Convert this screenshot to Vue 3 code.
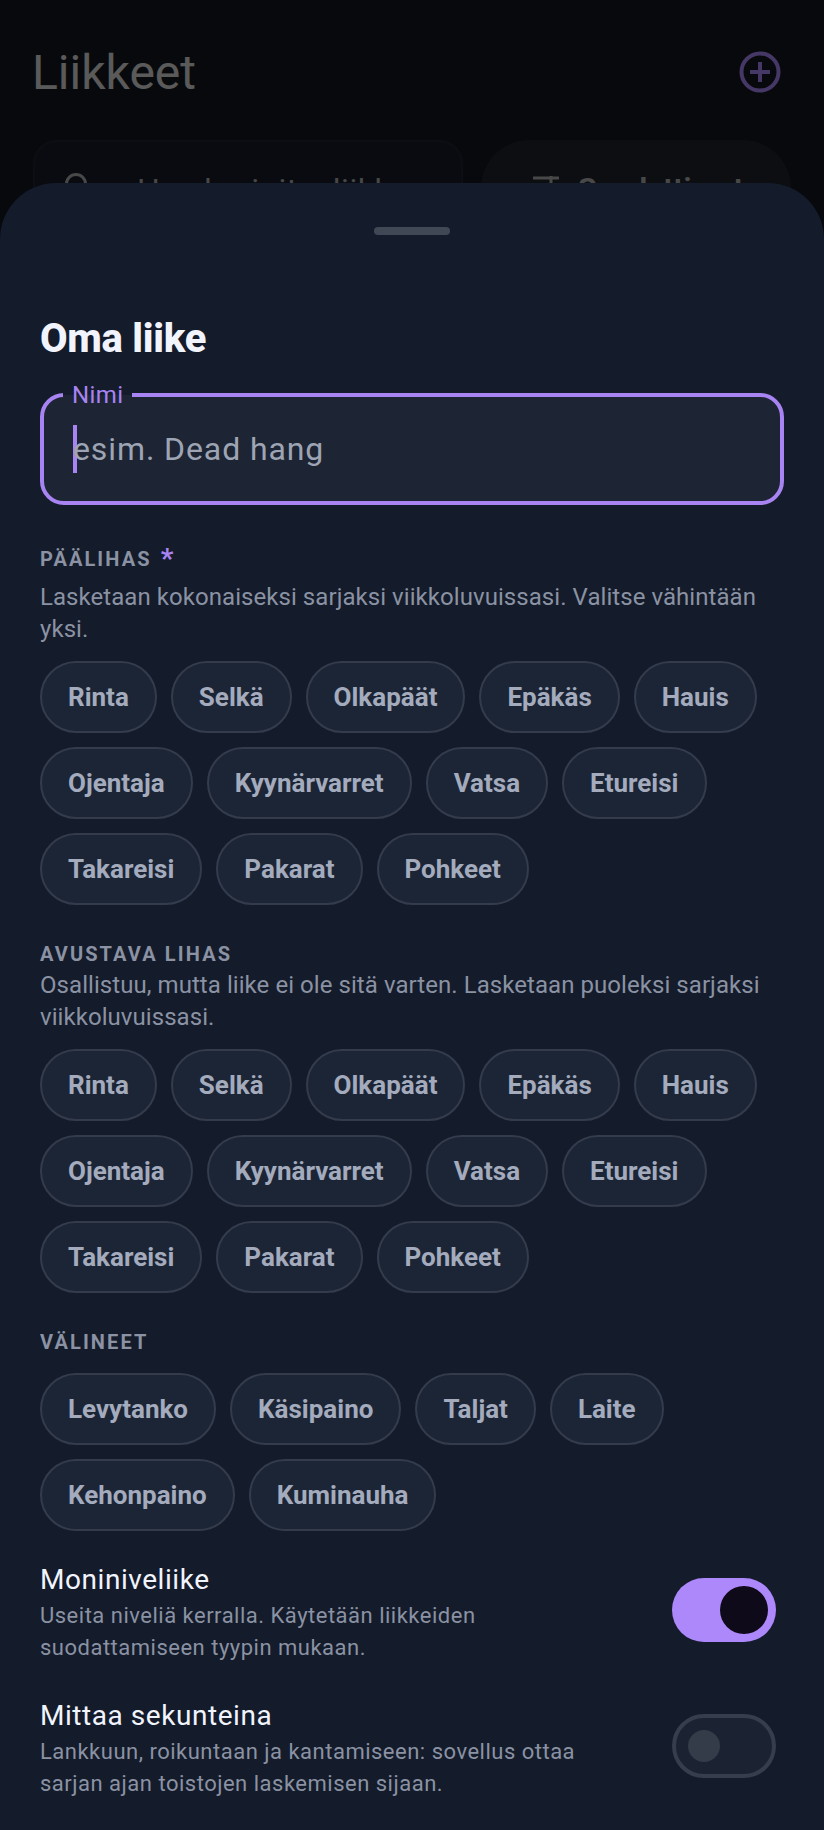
<template>
  <div class="screen">
    <div class="page">
      <header class="page-head">
        <h1>Liikkeet</h1>
        <svg class="add-icon" width="44" height="44" viewBox="0 0 44 44" fill="none">
          <circle cx="22" cy="22" r="18.5" stroke="#b08cff" stroke-width="4" />
          <path d="M22 12v20M12 22h20" stroke="#b08cff" stroke-width="4" />
        </svg>
      </header>
      <div class="page-tools">
        <div class="search">
          <svg width="32" height="40" viewBox="0 0 32 40" fill="none">
            <circle cx="11" cy="14" r="9.5" stroke="#b5b5b5" stroke-width="3" />
          </svg>
          <span>Hae harjoitusliikkeen</span>
        </div>
        <div class="filter">
          <svg width="32" height="40" viewBox="0 0 32 40" fill="none">
            <path d="M2 9h26M20 7v8" stroke="#b5b5b5" stroke-width="3" />
          </svg>
          <span>Suodattimet</span>
        </div>
      </div>
      <div class="scrim"></div>
    </div>

    <section class="sheet">
      <div class="handle"></div>
      <h2>Oma liike</h2>

      <div class="field">
        <span class="field-label">Nimi</span>
        <span class="caret"></span>
        <span class="placeholder">esim. Dead hang</span>
      </div>

      <div v-for="group in groups" :key="group.title" class="group">
        <div class="group-title" :class="{ required: group.required }">
          {{ group.title }}<span v-if="group.required" class="star"> *</span>
        </div>
        <p v-if="group.hint" class="hint">{{ group.hint }}</p>
        <div class="chips">
          <span v-for="chip in group.chips" :key="chip" class="chip">{{ chip }}</span>
        </div>
      </div>

      <div v-for="opt in options" :key="opt.title" class="option">
        <div class="option-text">
          <div class="option-title">{{ opt.title }}</div>
          <p class="option-hint">{{ opt.hint }}</p>
        </div>
        <div class="toggle" :class="{ on: opt.on }"><span class="thumb"></span></div>
      </div>
    </section>
  </div>
</template>

<script setup>
const muscles = [
  'Rinta', 'Selkä', 'Olkapäät', 'Epäkäs', 'Hauis', 'Ojentaja',
  'Kyynärvarret', 'Vatsa', 'Etureisi', 'Takareisi', 'Pakarat', 'Pohkeet',
]

const groups = [
  {
    title: 'PÄÄLIHAS',
    required: true,
    hint: 'Lasketaan kokonaiseksi sarjaksi viikkoluvuissasi. Valitse vähintään yksi.',
    chips: muscles,
  },
  {
    title: 'AVUSTAVA LIHAS',
    hint: 'Osallistuu, mutta liike ei ole sitä varten. Lasketaan puoleksi sarjaksi viikkoluvuissasi.',
    chips: muscles,
  },
  {
    title: 'VÄLINEET',
    chips: ['Levytanko', 'Käsipaino', 'Taljat', 'Laite', 'Kehonpaino', 'Kuminauha'],
  },
]

const options = [
  {
    title: 'Moniniveliike',
    hint: 'Useita niveliä kerralla. Käytetään liikkeiden suodattamiseen tyypin mukaan.',
    on: true,
  },
  {
    title: 'Mittaa sekunteina',
    hint: 'Lankkuun, roikuntaan ja kantamiseen: sovellus ottaa sarjan ajan toistojen laskemisen sijaan.',
    on: false,
  },
]
</script>

<style>
html, body {
  background: #07090d;
}
</style>

<style scoped>
.screen {
  position: relative;
  width: 824px;
  height: 1830px;
  overflow: hidden;
  background: #121720;
  font-family: Roboto, "Noto Sans", sans-serif;
}

/* page under the sheet */
.page {
  position: relative;
  height: 100%;
  padding: 40px 33px 0 32px;
  box-sizing: border-box;
}
.page-head {
  display: flex;
  align-items: center;
  justify-content: space-between;
  height: 64px;
}
.page-head h1 {
  margin: 0;
  font-size: 48px;
  font-weight: 400;
  color: #e0e0e0;
}
.add-icon {
  margin-right: 9px;
}
.page-tools {
  display: flex;
  gap: 18px;
  margin-top: 36px;
}
.search {
  display: flex;
  align-items: center;
  gap: 40px;
  width: 430px;
  height: 100px;
  margin-left: 1px;
  padding-left: 30px;
  box-sizing: border-box;
  border: 2px solid #1f2430;
  border-radius: 24px;
  background: #171d2b;
  color: #b5b5b5;
  font-size: 32px;
  letter-spacing: 0.5px;
}
.filter {
  display: flex;
  align-items: center;
  gap: 15px;
  width: 310px;
  height: 100px;
  padding: 0 0 3px 50px;
  box-sizing: border-box;
  border-radius: 48px;
  background: #1e242c;
  color: #b5b5b5;
  font-size: 30px;
  font-weight: 700;
}
.scrim {
  position: absolute;
  inset: 0;
  background: rgba(0, 0, 0, 0.6);
}

/* bottom sheet */
.sheet {
  position: absolute;
  left: 0;
  right: 0;
  top: 183px;
  bottom: 0;
  padding: 44px 40px 0;
  border-radius: 56px 56px 0 0;
  background: #141b2a;
}
.handle {
  width: 76px;
  height: 8px;
  margin: 0 auto;
  border-radius: 4px;
  background: #404856;
}
h2 {
  margin: 82px 0 0;
  font-size: 40px;
  line-height: 44px;
  font-weight: 800;
  letter-spacing: -0.3px;
  color: #f1f4fd;
}
.field {
  position: relative;
  display: flex;
  align-items: center;
  height: 112px;
  margin: 32px 0 42px;
  padding-left: 29px;
  box-sizing: border-box;
  border: 4px solid #a884f3;
  border-radius: 24px;
  background: #1d2433;
}
.field-label {
  position: absolute;
  left: 19px;
  top: -14px;
  padding: 0 9px;
  background: linear-gradient(#141b2a 12px, #1d2433 12px);
  font-size: 24px;
  line-height: 24px;
  letter-spacing: 0.4px;
  color: #a884f3;
}
.caret {
  width: 4px;
  height: 48px;
  margin-right: -4px;
  background: #a884f3;
}
.placeholder {
  font-size: 32px;
  letter-spacing: 0.9px;
  color: #9da5b4;
}
.group {
  margin-top: 37px;
}
.group-title {
  font-size: 20px;
  line-height: 24px;
  font-weight: 700;
  letter-spacing: 2.1px;
  color: #8a92a3;
}
.group-title.required {
  margin-bottom: 10px;
}
.star {
  font-size: 28px;
  vertical-align: -2px;
  color: #a884f3;
}
.hint {
  margin: 3px 0 0;
  font-size: 24px;
  line-height: 32px;
  letter-spacing: 0.06px;
  color: #8a92a3;
}
.chips {
  display: flex;
  flex-wrap: wrap;
  gap: 14px;
  margin-top: 16px;
}
.group-title + .chips {
  margin-top: 19px;
}
.chip {
  display: flex;
  align-items: center;
  height: 72px;
  padding: 0 26px;
  box-sizing: border-box;
  border: 2px solid #343c4c;
  border-radius: 36px;
  background: #1c2536;
  font-size: 26px;
  font-weight: 700;
  color: #a3abbd;
}
.option {
  display: flex;
  align-items: flex-start;
  justify-content: space-between;
  margin-top: 31px;
  padding-right: 8px;
}
.option + .option {
  margin-top: 34px;
}
.option-text {
  width: 560px;
}
.option-title {
  font-size: 28px;
  line-height: 36px;
  letter-spacing: 0.55px;
  color: #f1f4fd;
}
.option-hint {
  margin: 2px 0 0;
  font-size: 22px;
  line-height: 32px;
  letter-spacing: 0.5px;
  color: #8a92a3;
}
.toggle {
  position: relative;
  display: flex;
  align-items: center;
  width: 104px;
  height: 64px;
  margin-top: 16px;
  padding: 0 12px;
  box-sizing: border-box;
  border: 4px solid #363d4c;
  border-radius: 32px;
  background: #1b2333;
}
.thumb {
  width: 32px;
  height: 32px;
  border-radius: 50%;
  background: #343b49;
}
.toggle.on {
  justify-content: flex-end;
  padding: 0 8px;
  border: none;
  background: #ad88fb;
}
.toggle.on .thumb {
  width: 48px;
  height: 48px;
  background: #0f0a19;
}
</style>
